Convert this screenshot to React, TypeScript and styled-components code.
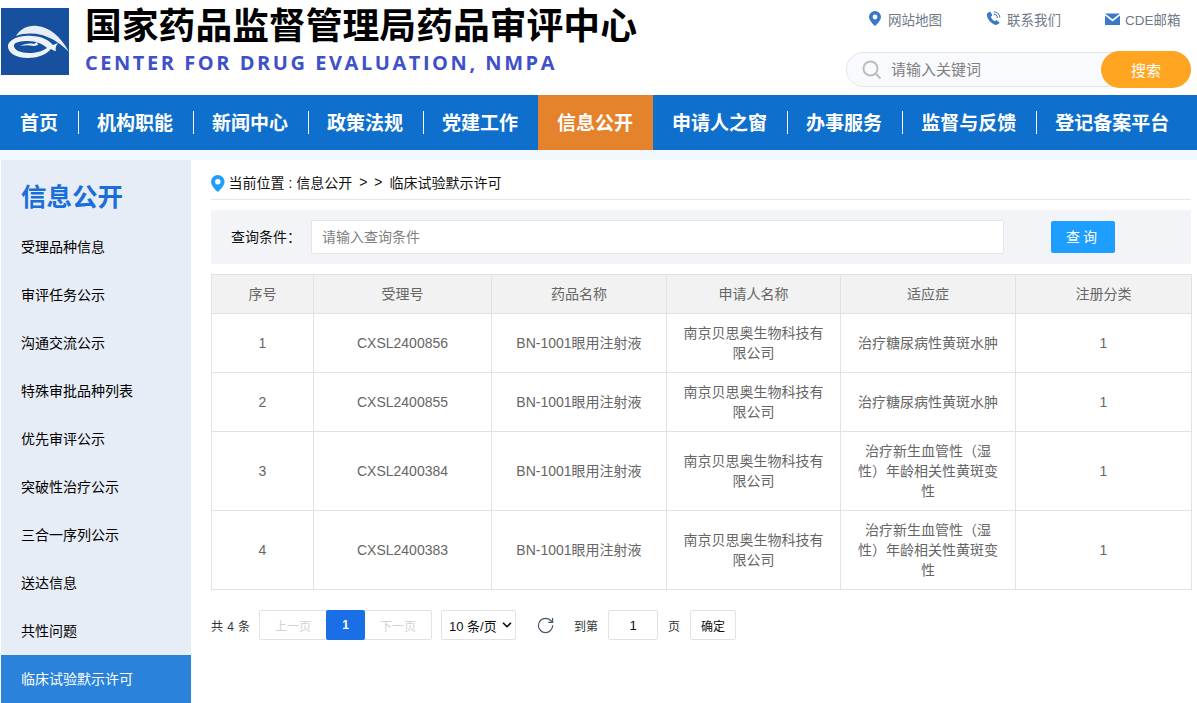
import React from "react";
import styled, { createGlobalStyle } from "styled-components";
import { ChevronDown, RotateCw } from "lucide-react";

const FONT = `"Liberation Sans", "Noto Sans CJK SC", sans-serif`;

const GlobalStyle = createGlobalStyle`
  html, body { margin: 0; padding: 0; background: #fff; }
  body { font-family: ${FONT}; width: 1197px; height: 703px; overflow: hidden; }
  * { box-sizing: border-box; }
`;

const Header = styled.header`
  display: flex;
  justify-content: space-between;
  height: 95px;
  background: #fff;
`;

const Brand = styled.div`
  display: flex;
  padding: 8px 0 0 1px;
`;

const Logo = styled.svg`
  width: 68px;
  height: 67px;
  flex: none;
`;

const BrandText = styled.div`
  margin-left: 16px;
`;

const BrandTitle = styled.div`
  font-size: 36.8px;
  line-height: 38px;
  font-weight: 700;
  color: #000;
  white-space: nowrap;
`;

const BrandSub = styled.div`
  margin-top: 5px;
  font-family: "Open Sans", sans-serif;
  font-size: 20px;
  line-height: 24px;
  font-weight: 700;
  letter-spacing: 2.55px;
  color: #3f51c8;
  white-space: nowrap;
`;

const HeaderRight = styled.div`
  width: 351px;
`;

const TopLinks = styled.div`
  display: flex;
  height: 52px;
  padding: 9px 0 0 23px;
  gap: 44px;
`;

const TopLink = styled.a<{ $gap: number }>`
  display: flex;
  align-items: center;
  height: 19px;
  gap: ${(p) => p.$gap}px;
  font-size: 13.5px;
  color: #6f7a88;
`;

const SearchBar = styled.div`
  position: relative;
  display: flex;
  align-items: center;
  height: 35px;
  width: 345px;
  border: 1px solid #e3e5ea;
  border-radius: 18px;
  background: #f9fafd;
  padding-left: 15px;
  gap: 9px;
`;

const SearchHint = styled.span`
  padding-bottom: 2px;
  font-size: 15px;
  color: #808080;
`;

const SearchButton = styled.button`
  position: absolute;
  right: -1px;
  top: -2px;
  width: 90px;
  height: 37px;
  padding: 0;
  border: 0;
  border-radius: 19px;
  background: #ffa521;
  color: #fff;
  font: 15px ${FONT};
`;

const NavBar = styled.nav`
  display: flex;
  height: 55px;
  padding-left: 0.5px;
  background: #0e6fcd;
`;

const NavItem = styled.a<{ $active?: boolean }>`
  position: relative;
  display: flex;
  align-items: center;
  justify-content: center;
  height: 100%;
  padding: 0 19.5px 2px;
  font-size: 19px;
  font-weight: 700;
  color: #fff;
  white-space: nowrap;
  background: ${(p) => (p.$active ? "#e5832c" : "transparent")};

  & + &::before {
    content: "";
    display: ${(p) => (p.$active ? "none" : "block")};
    position: absolute;
    left: 0;
    top: 16px;
    height: 23px;
    width: 1px;
    background: #fff;
  }
`;

const Body = styled.div`
  display: flex;
  gap: 20px;
  height: 553px;
  padding: 10px 6px 0 1px;
  background: linear-gradient(#f3f7fe 0, #f3f7fe 10px, #fff 10px);
`;

const Sidebar = styled.aside`
  flex: none;
  width: 190px;
  height: 543px;
  background: #e7edf6;
`;

const SideTitle = styled.div`
  height: 63px;
  padding: 22px 0 0 20px;
  font-size: 25.5px;
  line-height: 30px;
  font-weight: 700;
  color: #1a6ddb;
`;

const SideItem = styled.a<{ $active?: boolean }>`
  display: flex;
  align-items: center;
  height: 48px;
  padding: 0 0 2px 20px;
  font-size: 14px;
  color: ${(p) => (p.$active ? "#fff" : "#000")};
  background: ${(p) => (p.$active ? "#2a82da" : "transparent")};
`;

const Main = styled.main`
  flex: 1;
  min-width: 0;
`;

const Crumb = styled.div`
  display: flex;
  align-items: center;
  height: 40px;
  gap: 4px;
  border-bottom: 1px solid #e6e6e6;
  font-size: 14px;
  color: #111;
  padding-top: 5px;

  svg { margin-top: 2px; }
`;

const CrumbSep = styled.span`
  margin: 0 3px;
  word-spacing: 3px;
`;

const QueryBar = styled.div`
  display: flex;
  align-items: center;
  height: 54px;
  margin-top: 10px;
  padding: 0 0 0 20px;
  background: #f3f4f8;
`;

const QueryLabel = styled.span`
  width: 80px;
  padding-bottom: 2px;
  font-size: 14px;
  color: #111;
`;

const QueryInput = styled.div`
  display: flex;
  align-items: center;
  width: 693px;
  height: 34px;
  padding: 0 0 2px 10px;
  background: #fff;
  border: 1px solid #e4e6ea;
  border-radius: 2px;
  font-size: 14px;
  color: #808080;
`;

const QueryButton = styled.button`
  width: 64px;
  height: 32px;
  margin-left: 47px;
  padding: 0 0 2px;
  border: 0;
  border-radius: 2px;
  background: #1e9fff;
  color: #fff;
  font: 14px ${FONT};
  letter-spacing: 3px;
`;

const Table = styled.table`
  width: 980px;
  margin-top: 10px;
  border-collapse: collapse;
  table-layout: fixed;
  font-size: 14px;
  color: #666;
  text-align: center;

  th, td {
    border: 1px solid #e2e2e2;
    padding: 0 15px;
    line-height: 20px;
    font-weight: 400;
  }
  th { background: #f2f2f2; height: 39px; }
`;

const Row = styled.tr<{ $tall?: boolean }>`
  height: ${(p) => (p.$tall ? "79px" : "59px")};
`;

const Nowrap = styled.td`
  white-space: nowrap;
  && { padding: 0; }
`;

const Pager = styled.div`
  display: flex;
  align-items: center;
  height: 30px;
  margin-top: 20px;
  font-size: 12px;
  color: #333;
`;

const PagerTotal = styled.span`
  width: 48px;
  letter-spacing: 0.4px;
`;

const PageGroup = styled.div`
  display: flex;
  height: 30px;
  border: 1px solid #e2e2e2;
  border-radius: 2px;
`;

const PageBtn = styled.span<{ $active?: boolean }>`
  display: flex;
  align-items: center;
  justify-content: center;
  width: ${(p) => (p.$active ? "39px" : "66px")};
  margin: ${(p) => (p.$active ? "-1px 0" : "0")};
  border-radius: ${(p) => (p.$active ? "2px" : "0")};
  background: ${(p) => (p.$active ? "#1a6fe6" : "transparent")};
  color: ${(p) => (p.$active ? "#fff" : "#d2d2d2")};
  font-weight: ${(p) => (p.$active ? 700 : 400)};
`;

const PageSize = styled.span`
  display: flex;
  align-items: center;
  justify-content: space-between;
  width: 75px;
  height: 30px;
  margin-left: 9px;
  padding: 0 1px 0 7px;
  border: 1px solid #e2e2e2;
  border-radius: 2px;
  font-size: 13px;
  color: #111;
`;

const Refresh = styled.span`
  display: flex;
  margin: 0 0 0 20px;
  color: #44566c;
`;

const PagerText = styled.span<{ $gap: number }>`
  margin-left: ${(p) => p.$gap}px;
`;

const JumpInput = styled.span`
  display: flex;
  align-items: center;
  justify-content: center;
  width: 50px;
  height: 30px;
  margin-left: 10px;
  border: 1px solid #e2e2e2;
  border-radius: 2px;
  font-size: 13px;
  color: #111;
`;

const ConfirmBtn = styled.span`
  display: flex;
  align-items: center;
  justify-content: center;
  width: 46px;
  height: 30px;
  margin-left: 10px;
  border: 1px solid #e2e2e2;
  border-radius: 2px;
  font-size: 12px;
  color: #111;
`;

const navItems = ["首页", "机构职能", "新闻中心", "政策法规", "党建工作", "信息公开", "申请人之窗", "办事服务", "监督与反馈", "登记备案平台"];
const sideItems = ["受理品种信息", "审评任务公示", "沟通交流公示", "特殊审批品种列表", "优先审评公示", "突破性治疗公示", "三合一序列公示", "送达信息", "共性问题", "临床试验默示许可"];
const COMPANY = "南京贝思奥生物科技有限公司";
const DME = "治疗糖尿病性黄斑水肿";
const NV = "治疗新生血管性（湿性）年龄相关性黄斑变性";
const rows = [
  { id: 1, no: "CXSL2400856", ind: DME },
  { id: 2, no: "CXSL2400855", ind: DME },
  { id: 3, no: "CXSL2400384", ind: NV, tall: true },
  { id: 4, no: "CXSL2400383", ind: NV, tall: true },
];

const Pin = ({ color, size }: { color: string; size: number }) => (
  <svg width={size * 0.8} height={size} viewBox="0 0 12 15">
    <path fill={color} fillRule="evenodd" d="M6 0a6 6 0 0 0-6 6c0 4 6 9 6 9s6-5 6-9a6 6 0 0 0-6-6zm0 3.6a2.4 2.4 0 1 1 0 4.8 2.4 2.4 0 0 1 0-4.8z" />
  </svg>
);

const Phone = () => (
  <svg width="15" height="15" viewBox="0 0 16 16" fill="none">
    <path fill="#3b78c9" d="M3.2 1 1 2.8c-.6 4.6 3.800 10.600 9.800 12.200l3.200-1.800c.5-.4.4-.9 0-1.300l-2.300-1.800c-.4-.3-.8-.3-1.200 0l-1 .9C7.300 10 5.600 7.600 5.100 6l1.100-.8c.4-.3.4-.7.300-1.100L5 1.300C4.700.8 3.800.6 3.200 1z" />
    <path stroke="#3b78c9" strokeWidth="1.100" d="M8 3.200c2.200.2 4 2 4.300 4.300M8.500.8c3.300.3 6 3 6.400 6.300" />
  </svg>
);

const Mail = () => (
  <svg width="15" height="12" viewBox="0 0 15 12">
    <path fill="#3b78c9" d="M0 .5h15L7.500 6.300zM0 2.600l7.500 5.800L15 2.600V12H0z" />
  </svg>
);

const SearchGlyph = () => (
  <svg width="20" height="20" viewBox="0 0 20 20" fill="none">
    <circle cx="8.500" cy="8.500" r="7" stroke="#bdbdbd" strokeWidth="2" />
    <path d="M14 14l4.500 4.500" stroke="#bdbdbd" strokeWidth="2" />
  </svg>
);

const App = () => (
  <>
    <GlobalStyle />
    <Header>
      <Brand>
        <Logo viewBox="0 0 68 67">
          <rect width="68" height="67" fill="#16509f" />
          <path fill="#e6edf5" d="M15 28C19 21 27 17 36 18c13 1 24 11 32 26-9-9-17-14-27-17-9-2-18-2-26 1z" />
          <path fill="#eef3f8" fillRule="evenodd" d="M7 37c2-6 12-10 24-9 9 0 17 4 21 9l5-2c-2 3-3 5-2 8-2 0-3-1-5-2-5 6-14 9-23 9-13 0-21-6-20-13zm6 0c-1 5 7 8 15 8 7 0 14-2 18-5-4-4-11-7-19-7-7 0-13 1-14 4z" />
          <path fill="#eef3f8" d="M19 38c4-2 9-3 14-2l3-2 1 3-4 1c-5-1-9-1-14 0z" />
        </Logo>
        <BrandText>
          <BrandTitle>国家药品监督管理局药品审评中心</BrandTitle>
          <BrandSub>CENTER FOR DRUG EVALUATION, NMPA</BrandSub>
        </BrandText>
      </Brand>
      <HeaderRight>
        <TopLinks>
          <TopLink $gap={7}><Pin color="#3b78c9" size={15} />网站地图</TopLink>
          <TopLink $gap={6}><Phone />联系我们</TopLink>
          <TopLink $gap={5}><Mail />CDE邮箱</TopLink>
        </TopLinks>
        <SearchBar>
          <SearchGlyph />
          <SearchHint>请输入关键词</SearchHint>
          <SearchButton>搜索</SearchButton>
        </SearchBar>
      </HeaderRight>
    </Header>
    <NavBar>
      {navItems.map((n) => (
        <NavItem key={n} $active={n === "信息公开"}>{n}</NavItem>
      ))}
    </NavBar>
    <Body>
      <Sidebar>
        <SideTitle>信息公开</SideTitle>
        {sideItems.map((s, i) => (
          <SideItem key={s} $active={i === sideItems.length - 1}>{s}</SideItem>
        ))}
      </Sidebar>
      <Main>
        <Crumb>
          <Pin color="#1e9fff" size={17} />
          当前位置 : 信息公开
          <CrumbSep>&gt; &gt;</CrumbSep>
          临床试验默示许可
        </Crumb>
        <QueryBar>
          <QueryLabel>查询条件：</QueryLabel>
          <QueryInput>请输入查询条件</QueryInput>
          <QueryButton>查询</QueryButton>
        </QueryBar>
        <Table>
          <colgroup>
            <col width="102" />
            <col width="178" />
            <col width="175" />
            <col width="174" />
            <col width="175" />
            <col width="176" />
          </colgroup>
          <thead>
            <tr>
              <th>序号</th>
              <th>受理号</th>
              <th>药品名称</th>
              <th>申请人名称</th>
              <th>适应症</th>
              <th>注册分类</th>
            </tr>
          </thead>
          <tbody>
            {rows.map((r) => (
              <Row key={r.id} $tall={r.tall}>
                <td>{r.id}</td>
                <Nowrap>{r.no}</Nowrap>
                <Nowrap>BN-1001眼用注射液</Nowrap>
                <td>{COMPANY}</td>
                <td>{r.ind}</td>
                <td>1</td>
              </Row>
            ))}
          </tbody>
        </Table>
        <Pager>
          <PagerTotal>共 4 条</PagerTotal>
          <PageGroup>
            <PageBtn>上一页</PageBtn>
            <PageBtn $active>1</PageBtn>
            <PageBtn>下一页</PageBtn>
          </PageGroup>
          <PageSize>10 条/页<ChevronDown size={14} strokeWidth={3} /></PageSize>
          <Refresh><RotateCw size={19} strokeWidth={1.5} /></Refresh>
          <PagerText $gap={19}>到第</PagerText>
          <JumpInput>1</JumpInput>
          <PagerText $gap={10}>页</PagerText>
          <ConfirmBtn>确定</ConfirmBtn>
        </Pager>
      </Main>
    </Body>
  </>
);

export default App;
